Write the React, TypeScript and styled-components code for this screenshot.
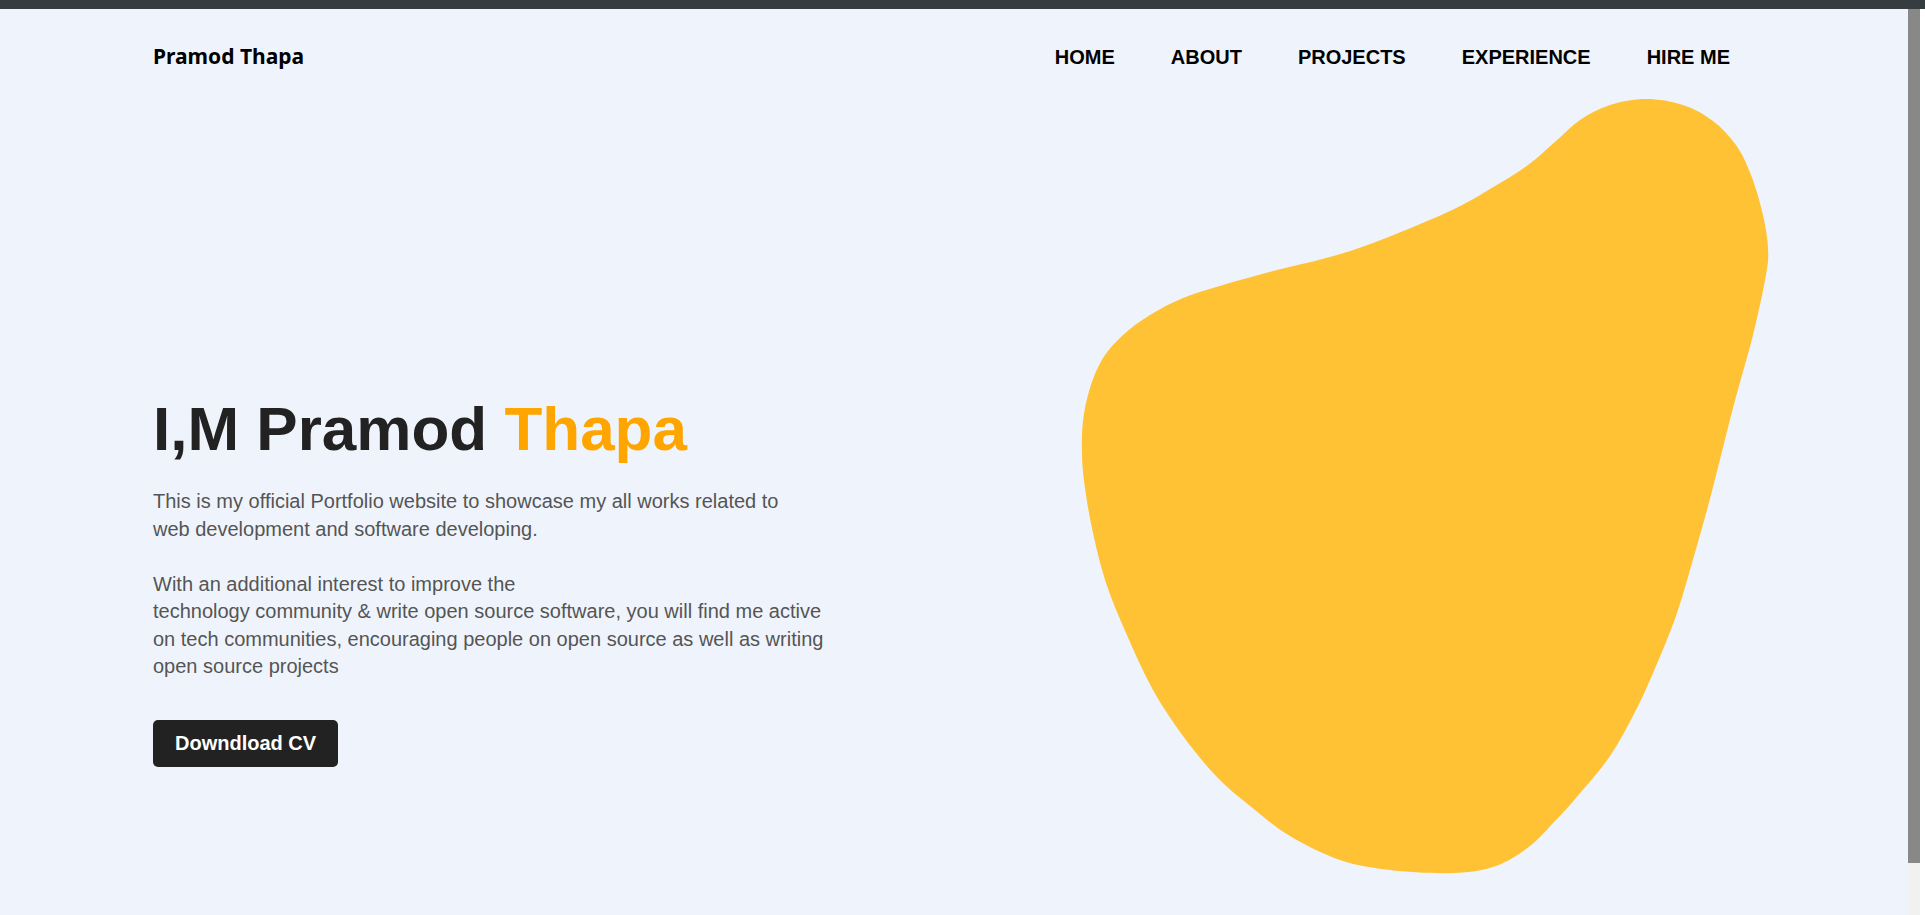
import * as React from 'react'
import styled, { createGlobalStyle } from 'styled-components'

const GlobalStyle = createGlobalStyle`
  html, body {
    margin: 0;
    padding: 0;
    overflow: hidden;
    background: #ffffff;
  }
  * {
    box-sizing: border-box;
  }
`

const Page = styled.div`
  width: 100%;
  height: 100vh;
  display: flex;
  flex-direction: column;
`

const TopBar = styled.div`
  height: 9px;
  flex-shrink: 0;
  background: #363d40;
`

const Viewport = styled.div`
  flex: 1;
  display: flex;
  min-height: 0;
`

const Main = styled.main`
  width: 1908px;
  flex-shrink: 0;
  overflow: hidden;
  background: #eff4fc;
`

// the browser scrollbar seen at the right of the window
const ScrollTrack = styled.div`
  width: 12px;
  flex-shrink: 0;
  background: #f1f1f1;
`

const ScrollThumb = styled.div`
  height: 854px;
  background: #888888;
`

const Gutter = styled.div`
  flex: 1;
  background: #ffffff;
`

const Container = styled.div`
  padding: 0 150px 0 153px;
`

const Header = styled.header`
  height: 86px;
  padding-top: 35px;
  display: flex;
  justify-content: space-between;
  align-items: flex-start;
`

const Logo = styled.a`
  font-family: 'Noto Sans', sans-serif;
  font-weight: 700;
  font-size: 21px;
  color: #000;
  text-decoration: none;
  margin-top: -2px;
`

const Nav = styled.nav`
  display: flex;
  margin-top: 2px;
`

const NavLink = styled.a`
  font-family: 'Liberation Sans', Arial, sans-serif;
  font-weight: 700;
  font-size: 20px;
  color: #000;
  text-decoration: none;
  text-transform: uppercase;
  padding: 0 28px;
`

const Hero = styled.section`
  height: 875px;
  display: grid;
  grid-template-columns: 1fr 692px;
`

const Intro = styled.div`
  padding-top: 298px;
  font-family: 'Liberation Sans', Arial, sans-serif;
`

const Title = styled.h1`
  margin: 0;
  font-size: 62px;
  font-weight: 700;
  color: #222222;
`

const Accent = styled.span`
  color: #ffa500;
`

const Description = styled.p`
  margin: 24px 0 0;
  max-width: 675px;
  font-size: 20px;
  line-height: 27.5px;
  color: #555555;
`

const CvButton = styled.button`
  display: block;
  margin-top: 39px;
  padding: 12px 22px;
  border: none;
  border-radius: 5px;
  background: #222222;
  color: #ffffff;
  font-family: 'Liberation Sans', Arial, sans-serif;
  font-weight: 700;
  font-size: 20px;
  line-height: 23px;
  cursor: pointer;
`

const Blob = styled.svg`
  justify-self: end;
  margin-right: -12px;
`

const blobPoints: [number, number][] = [
  [568, 4], [532, 10], [502, 25], [478, 46], [450, 70], [412, 94],
  [372, 116], [295, 148], [248, 163], [195, 176], [145, 190], [105, 203],
  [72, 220], [45, 240], [25, 263], [12, 293], [5, 326], [4, 360],
  [7, 393], [15, 438], [28, 488], [48, 538], [75, 595], [105, 641],
  [138, 681], [172, 711], [212, 741], [262, 765], [312, 775], [375, 778],
  [418, 771], [452, 751], [478, 725], [498, 703], [532, 661], [558, 615],
  [578, 571], [598, 521], [614, 468], [633, 400], [655, 313],
  [675, 240], [688, 180], [690, 153], [685, 120], [673, 80], [658, 50],
  [635, 26], [605, 10],
]

function smoothPath(pts: [number, number][]): string {
  const n = pts.length
  let d = `M${pts[0][0]},${pts[0][1]}`
  for (let i = 0; i < n; i++) {
    const p0 = pts[(i - 1 + n) % n]
    const p1 = pts[i]
    const p2 = pts[(i + 1) % n]
    const p3 = pts[(i + 2) % n]
    const c1 = [p1[0] + (p2[0] - p0[0]) / 6, p1[1] + (p2[1] - p0[1]) / 6]
    const c2 = [p2[0] - (p3[0] - p1[0]) / 6, p2[1] - (p3[1] - p1[1]) / 6]
    d += ` C${c1[0].toFixed(1)},${c1[1].toFixed(1)} ${c2[0].toFixed(1)},${c2[1].toFixed(1)} ${p2[0]},${p2[1]}`
  }
  return d + 'Z'
}

const links = ['Home', 'About', 'Projects', 'Experience', 'Hire me']

export default function App() {
  return (
    <Page>
      <GlobalStyle />
      <TopBar />
      <Viewport>
        <Main>
          <Container>
            <Header>
              <Logo href="#">Pramod Thapa</Logo>
              <Nav>
                {links.map(link => (
                  <NavLink key={link} href="#">{link}</NavLink>
                ))}
              </Nav>
            </Header>

            <Hero>
              <Intro>
                <Title>
                  I,M Pramod <Accent>Thapa</Accent>
                </Title>
                <Description>
                  This is my official Portfolio website to showcase my all works related to
                  <br />
                  web development and software developing.
                  <br />
                  <br />
                  With an additional interest to improve the
                  <br />
                  technology community &amp; write open source software, you will find me active on tech communities, encouraging people on open source as well as writing open source projects
                </Description>
                <CvButton>Downdload CV</CvButton>
              </Intro>

              <Blob width="692" height="782" viewBox="0 0 692 782">
                <path d={smoothPath(blobPoints)} fill="#ffc234" />
              </Blob>
            </Hero>
          </Container>
        </Main>
        <ScrollTrack>
          <ScrollThumb />
        </ScrollTrack>
        <Gutter />
      </Viewport>
    </Page>
  )
}
